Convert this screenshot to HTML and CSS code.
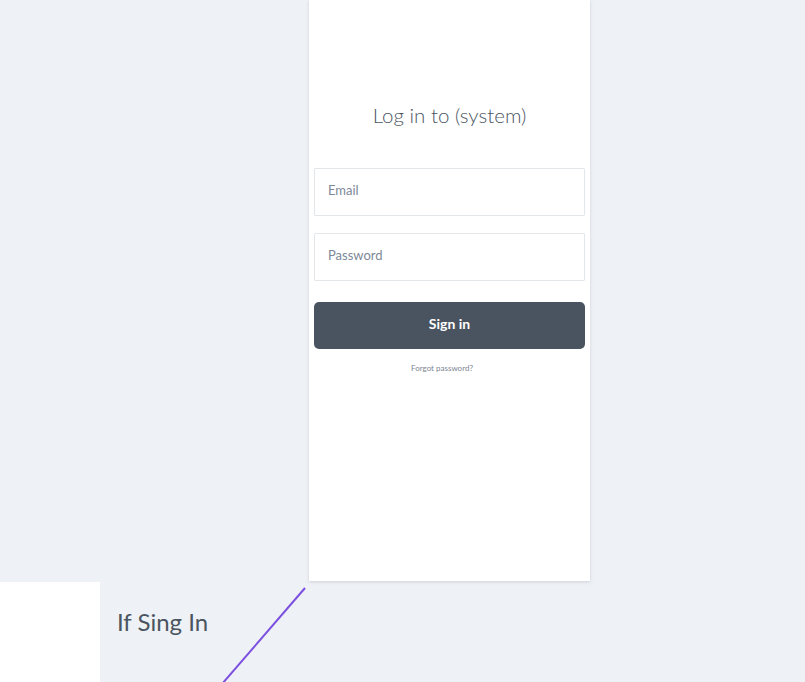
FILE: index.html
```html
<!DOCTYPE html>
<html>
<head>
<meta charset="utf-8">
<link rel="stylesheet" href="styles.css">
</head>
<body>
<div class="canvas">
  <div class="card">
    <h1 class="title">Log in to (system)</h1>
    <form class="form">
      <input class="field" type="text" placeholder="Email">
      <input class="field" type="password" placeholder="Password">
      <button class="btn" type="button">Sign in</button>
      <a class="forgot" href="#">Forgot password?</a>
    </form>
  </div>
  <div class="screen2"></div>
  <div class="label">If Sing In</div>
  <svg class="connector" width="805" height="682" viewBox="0 0 805 682">
    <line x1="305" y1="588" x2="222" y2="684" stroke="#7b4fe0" stroke-width="2"/>
  </svg>
</div>
</body>
</html>
```

FILE: styles.css
```css
html, body {
  margin: 0;
  padding: 0;
  background: #eef1f5;
  font-family: Lato, "Noto Sans", sans-serif;
}
.canvas {
  position: relative;
  width: 805px;
  height: 682px;
  overflow: hidden;
}
.card {
  position: absolute;
  left: 309px;
  top: 0;
  width: 281px;
  height: 581px;
  background: #ffffff;
  box-shadow: 0 1px 3px rgba(60, 70, 90, 0.18);
  box-sizing: border-box;
  padding: 0 5px;
  display: flex;
  flex-direction: column;
}
.title {
  margin: 102px 0 0;
  height: 66px;
  font-weight: 300;
  font-size: 20.5px;
  line-height: 26px;
  color: #4b5562;
  text-align: center;
}
.form {
  display: flex;
  flex-direction: column;
  margin: 0;
}
.field {
  height: 48px;
  box-sizing: border-box;
  border: 1px solid #e3e7ea;
  border-radius: 1px;
  padding: 0 13px 4px;
  font-family: Lato, sans-serif;
  font-size: 13px;
  color: #4b5562;
  margin: 0 0 17px;
  outline: none;
  background: #fff;
}
.field::placeholder {
  color: #7d8898;
}
.field + .field {
  margin-bottom: 21px;
}
.btn {
  height: 47px;
  border: 0;
  border-radius: 5px;
  background: #4a5460;
  color: #ffffff;
  font-family: Lato, sans-serif;
  font-weight: 700;
  font-size: 14px;
  padding: 0 0 4px;
  cursor: pointer;
}
.forgot {
  margin-top: 14px;
  align-self: center;
  margin-left: -15px;
  font-size: 8px;
  color: #7d8593;
  text-decoration: none;
}
.screen2 {
  position: absolute;
  left: 0;
  top: 582px;
  width: 100px;
  height: 100px;
  background: #ffffff;
}
.label {
  position: absolute;
  left: 117px;
  top: 607px;
  font-size: 24px;
  line-height: 30px;
  color: #4b5562;
}
.connector {
  position: absolute;
  left: 0;
  top: 0;
  pointer-events: none;
}
```
